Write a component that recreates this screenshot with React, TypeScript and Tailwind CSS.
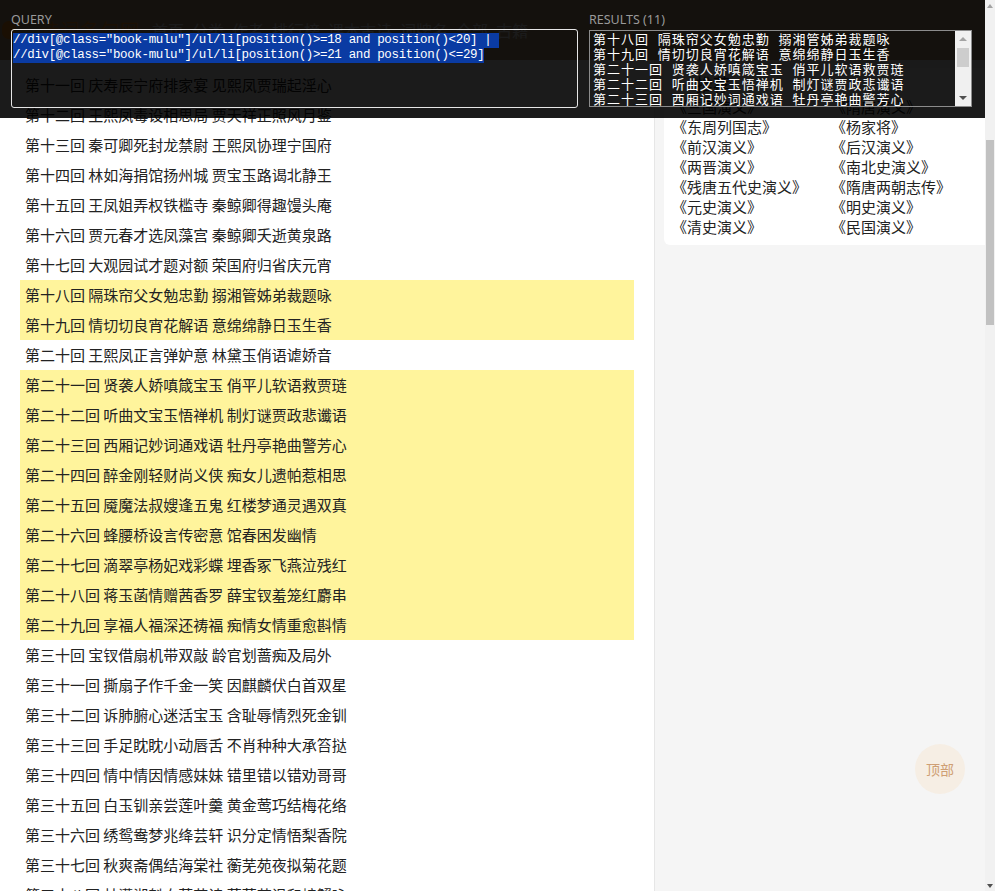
import React from "react";

const chapters: string[] = [
  "第十一回 庆寿辰宁府排家宴 见熙凤贾瑞起淫心",
  "第十二回 王熙凤毒设相思局 贾天祥正照风月鉴",
  "第十三回 秦可卿死封龙禁尉 王熙凤协理宁国府",
  "第十四回 林如海捐馆扬州城 贾宝玉路谒北静王",
  "第十五回 王凤姐弄权铁槛寺 秦鲸卿得趣馒头庵",
  "第十六回 贾元春才选凤藻宫 秦鲸卿夭逝黄泉路",
  "第十七回 大观园试才题对额 荣国府归省庆元宵",
  "第十八回 隔珠帘父女勉忠勤 搦湘管姊弟裁题咏",
  "第十九回 情切切良宵花解语 意绵绵静日玉生香",
  "第二十回 王熙凤正言弹妒意 林黛玉俏语谑娇音",
  "第二十一回 贤袭人娇嗔箴宝玉 俏平儿软语救贾琏",
  "第二十二回 听曲文宝玉悟禅机 制灯谜贾政悲谶语",
  "第二十三回 西厢记妙词通戏语 牡丹亭艳曲警芳心",
  "第二十四回 醉金刚轻财尚义侠 痴女儿遗帕惹相思",
  "第二十五回 魇魔法叔嫂逢五鬼 红楼梦通灵遇双真",
  "第二十六回 蜂腰桥设言传密意 馆春困发幽情",
  "第二十七回 滴翠亭杨妃戏彩蝶 埋香冢飞燕泣残红",
  "第二十八回 蒋玉菡情赠茜香罗 薛宝钗羞笼红麝串",
  "第二十九回 享福人福深还祷福 痴情女情重愈斟情",
  "第三十回 宝钗借扇机带双敲 龄官划蔷痴及局外",
  "第三十一回 撕扇子作千金一笑 因麒麟伏白首双星",
  "第三十二回 诉肺腑心迷活宝玉 含耻辱情烈死金钏",
  "第三十三回 手足眈眈小动唇舌 不肖种种大承笞挞",
  "第三十四回 情中情因情感妹妹 错里错以错劝哥哥",
  "第三十五回 白玉钏亲尝莲叶羹 黄金莺巧结梅花络",
  "第三十六回 绣鸳鸯梦兆绛芸轩 识分定情悟梨香院",
  "第三十七回 秋爽斋偶结海棠社 蘅芜苑夜拟菊花题",
  "第三十八回 林潇湘魁夺菊花诗 薛蘅芜讽和螃蟹咏",
];

const highlighted = new Set([18, 19, 21, 22, 23, 24, 25, 26, 27, 28, 29]);

const results = chapters.filter((_, i) => highlighted.has(i + 11));

const books: [string, string][] = [
  ["《三国演义》", "《隋唐演义》"],
  ["《东周列国志》", "《杨家将》"],
  ["《前汉演义》", "《后汉演义》"],
  ["《两晋演义》", "《南北史演义》"],
  ["《残唐五代史演义》", "《隋唐两朝志传》"],
  ["《元史演义》", "《明史演义》"],
  ["《清史演义》", "《民国演义》"],
];

const nav = ["首页", "分类", "作者", "排行榜", "课本古诗", "词牌名", "全部", "古籍"];

const cjk = { fontFamily: '"Noto Sans CJK SC", "Noto Sans", sans-serif' };
const mono = { fontFamily: '"Liberation Mono", "Noto Sans CJK SC", monospace' };

export default function App() {
  return (
    <div className="relative w-[995px] h-[891px] overflow-hidden bg-white" style={cjk}>
      {/* page */}
      <div className="w-[985px] h-full flex flex-col">
        <div className="h-[60px] shrink-0 bg-[#bea27c] flex items-center">
          <div className="ml-[2px] w-[14px] h-[18px] rounded-full bg-[#f08a1c]" />
          <div className="ml-[24px] text-[19px] text-[#ff9a2a] tracking-[1px]">诗词名句网</div>
          <div className="ml-[12px] flex gap-[8px] text-[16px] text-white">
            {nav.map((n) => (
              <span key={n}>{n}</span>
            ))}
          </div>
        </div>
        <div className="flex flex-1 min-h-0">
          <div className="w-[655px] shrink-0 border-r border-[#e6e6e6] px-[20px] pt-[10px] bg-white">
            <ul>
              {chapters.map((c, i) => (
                <li
                  key={c}
                  className={`pl-[5px] leading-[30px] h-[30px] text-[15px] text-[#222] whitespace-nowrap ${
                    highlighted.has(i + 11) ? "bg-[#fff49c]" : ""
                  }`}
                >
                  {c}
                </li>
              ))}
            </ul>
          </div>
          <div className="flex-1 bg-[#f5f5f5] pl-[9px]">
            <div className="mt-[8px] bg-white rounded-l-[6px] pt-[2px] pb-[8px] pl-[8px]">
              <div className="h-[27px] leading-[27px] pl-[24px] text-[17px] text-[#333]">推荐</div>
              <div className="grid grid-cols-[159px_1fr] text-[15px] leading-[20px] text-[#222]">
                {books.map(([a, b]) => (
                  <React.Fragment key={a}>
                    <span className="whitespace-nowrap">{a}</span>
                    <span className="whitespace-nowrap">{b}</span>
                  </React.Fragment>
                ))}
              </div>
            </div>
          </div>
        </div>
      </div>

      {/* page scrollbar */}
      <div className="absolute right-0 top-0 w-[10px] h-full bg-[#f1f1f1]">
        <div className="absolute left-[2px] top-[4px] w-0 h-0 border-l-[3px] border-r-[3px] border-b-[4px] border-l-transparent border-r-transparent border-b-[#a3a3a3]" />
        <div className="absolute left-[1px] top-[140px] w-[8px] h-[185px] bg-[#c1c1c1]" />
        <div className="absolute left-[2px] bottom-[3px] w-0 h-0 border-l-[3px] border-r-[3px] border-t-[4px] border-l-transparent border-r-transparent border-t-[#505050]" />
      </div>

      {/* back to top */}
      <div className="absolute left-[915px] top-[744px] w-[50px] h-[50px] rounded-full bg-[#f6eee4] flex items-center justify-center text-[14px] text-[#cf9f74]">
        顶部
      </div>

      {/* XPath helper overlay */}
      <div className="absolute left-0 top-0 w-[985px] h-[118px] bg-[rgba(0,0,0,0.895)] flex pl-[11px] pt-[12px] gap-[11px]">
        <div className="w-[567px] flex flex-col">
          <div className="h-[17px] leading-[16px] text-[12.5px] text-[#9a9a9a]" style={{ fontFamily: '"Noto Sans", sans-serif' }}>
            QUERY
          </div>
          <div className="h-[79px] border border-[#e6e6e6] rounded-[3px] pt-[3px] pl-[1px]" style={mono}>
            <div className="w-fit bg-[#0a3ba3] text-white text-[12.5px] leading-[15px] tracking-[-0.36px] whitespace-pre">
              {'//div[@class="book-mulu"]/ul/li[position()>=18 and position()<20] | '}
            </div>
            <div className="w-fit bg-[#0a3ba3] text-white text-[12.5px] leading-[15px] tracking-[-0.36px] whitespace-pre">
              {'//div[@class="book-mulu"]/ul/li[position()>=21 and position()<=29]'}
            </div>
          </div>
        </div>
        <div className="w-[383px] flex flex-col">
          <div className="h-[18px] leading-[16px] text-[12.5px] text-[#9a9a9a]" style={{ fontFamily: '"Noto Sans", sans-serif' }}>
            RESULTS (11)
          </div>
          <div className="h-[77px] border border-[#8c8c8c] flex">
            <div className="flex-1 overflow-hidden pl-[3px] pt-[2px]" style={mono}>
              {results.map((r) => (
                <div key={r} className="text-[13px] leading-[15px] tracking-[1px] text-white whitespace-pre">
                  {r}
                </div>
              ))}
            </div>
            <div className="w-[16px] bg-[#f0f0f0] relative shrink-0">
              <div className="absolute left-[4px] top-[6px] w-0 h-0 border-l-[4px] border-r-[4px] border-b-[4px] border-l-transparent border-r-transparent border-b-[#a3a3a3]" />
              <div className="absolute left-[2px] top-[17px] w-[12px] h-[19px] bg-[#cdcdcd]" />
              <div className="absolute left-[4px] bottom-[6px] w-0 h-0 border-l-[4px] border-r-[4px] border-t-[4px] border-l-transparent border-r-transparent border-t-[#505050]" />
            </div>
          </div>
        </div>
      </div>
    </div>
  );
}
